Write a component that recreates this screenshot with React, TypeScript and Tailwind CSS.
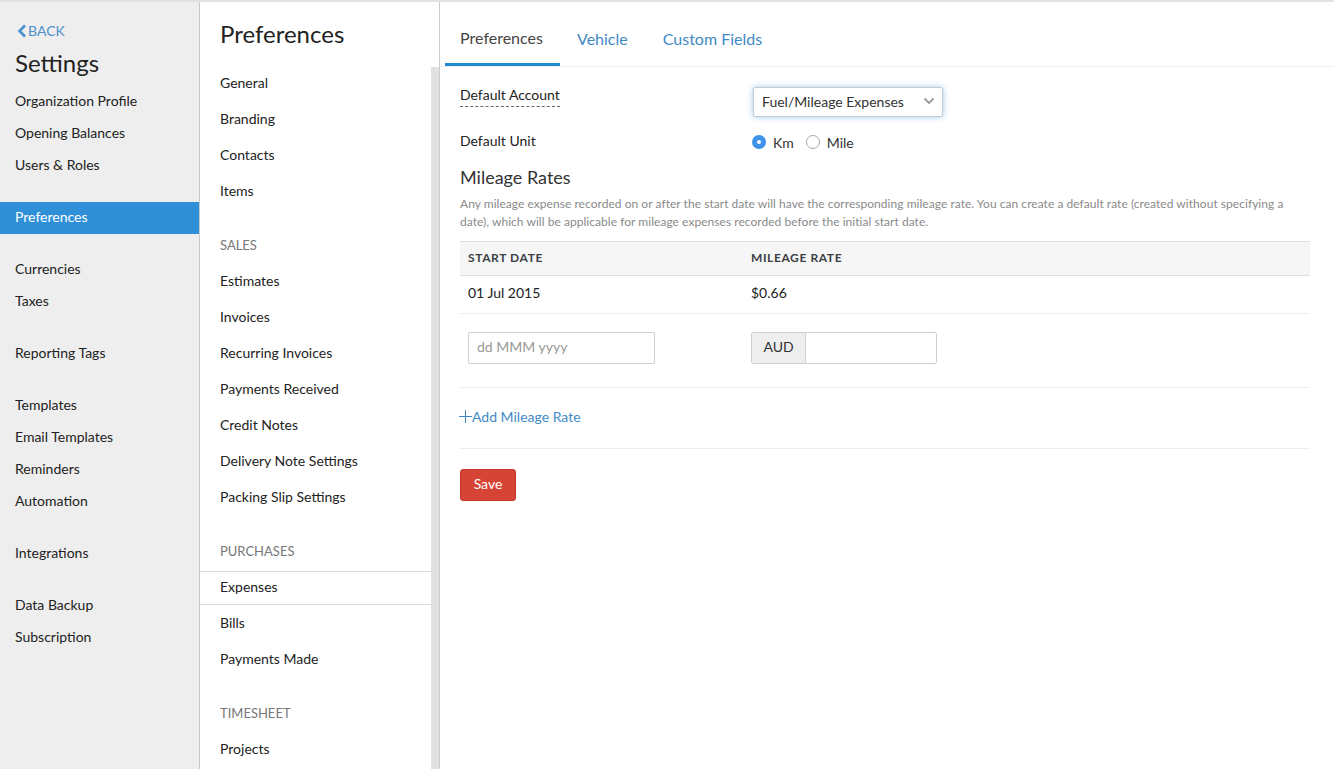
const F = { fontFamily: '"Lato", "Liberation Sans", sans-serif' };

function SideItem({ label, active }: { label: string; active?: boolean }) {
  return (
    <div className={`flex h-8 items-center pl-[15px] text-[14px] ${active ? 'bg-[#2f90d8] pb-1 text-white' : 'pb-[2px] text-[#222]'}`}>
      {label}
    </div>
  );
}

function SideGroup({ items, className = 'mb-5' }: { items: string[]; className?: string }) {
  return <div className={className}>{items.map((i) => <SideItem key={i} label={i} active={i === 'Preferences'} />)}</div>;
}

function MidItem({ label }: { label: string }) {
  return <div className="flex h-9 items-center pl-5 text-[14px] text-[#222]">{label}</div>;
}

function MidActive({ label }: { label: string }) {
  return (
    <div className="h-9 pt-[3px]">
      <div className="flex h-[34px] items-center border-y border-[#dcdcdc] pb-1 pl-5 text-[14px] text-[#222]">{label}</div>
    </div>
  );
}

function MidHead({ label }: { label: string }) {
  return <div className="mt-[18px] flex h-9 items-center pl-5 pt-1 text-[13px] text-[#777]">{label}</div>;
}

export default function App() {
  return (
    <div style={F} className="flex h-[769px] w-[1334px] overflow-hidden border-t-2 border-[#e2e2e2] bg-white">
      <aside className="w-[200px] shrink-0 border-r border-[#c8c8c8] bg-[#eeeeee]">
        <div className="flex items-center pl-[17px] pt-[19px] text-[14px] leading-5 text-[#4a90cc]">
          <svg width="10" height="14" viewBox="0 0 10 14" className="mr-px"><path d="M8 1.5 2.5 7 8 12.5" fill="none" stroke="#4a90cc" strokeWidth="2.6" /></svg>
          BACK
        </div>
        <h1 className="mb-[6px] pl-[15px] pt-[6px] text-[24px] font-normal leading-[32px] text-[#222]">Settings</h1>
        <SideGroup className="mb-[21px]" items={['Organization Profile', 'Opening Balances', 'Users & Roles']} />
        <SideGroup className="mb-[19px]" items={['Preferences']} />
        <SideGroup items={['Currencies', 'Taxes']} />
        <SideGroup items={['Reporting Tags']} />
        <SideGroup items={['Templates', 'Email Templates', 'Reminders', 'Automation']} />
        <SideGroup items={['Integrations']} />
        <SideGroup items={['Data Backup', 'Subscription']} />
      </aside>

      <nav className="flex w-[240px] shrink-0 flex-col border-r border-[#cccccc]">
        <h2 className="h-[62px] pl-5 pt-4 text-[24px] font-normal leading-8 text-[#222]">Preferences</h2>
        <div className="flex min-h-0 flex-1">
          <div className="min-w-0 flex-1">
            {['General', 'Branding', 'Contacts', 'Items'].map((i) => <MidItem key={i} label={i} />)}
            <MidHead label="SALES" />
            {['Estimates', 'Invoices', 'Recurring Invoices', 'Payments Received', 'Credit Notes', 'Delivery Note Settings', 'Packing Slip Settings'].map((i) => <MidItem key={i} label={i} />)}
            <MidHead label="PURCHASES" />
            <MidActive label="Expenses" />
            {['Bills', 'Payments Made'].map((i) => <MidItem key={i} label={i} />)}
            <MidHead label="TIMESHEET" />
            <MidItem label="Projects" />
          </div>
          <div className="mt-[3px] w-2 shrink-0 bg-[#e1e1e1]" />
        </div>
      </nav>

      <main className="min-w-0 flex-1">
        <div className="flex h-[65px] items-end border-b border-[#eeeeee] pl-[5px]">
          <div className="flex h-[65px] w-[115px] items-center justify-center border-b-[3px] border-[#1e88d2] pr-[2px] pt-[11px] text-[16px] text-[#444]">Preferences</div>
          <div className="flex h-[65px] items-center pl-[17px] pt-[10px] text-[16px] text-[#3f8ac6]">Vehicle</div>
          <div className="flex h-[65px] items-center pl-[35px] pt-[10px] text-[16px] text-[#3f8ac6]">Custom Fields</div>
        </div>

        <div className="pl-5 pr-6">
          <div className="flex h-[59px]">
            <div className="w-[293px] pt-[15px]">
              <span className="inline-block border-b border-dashed border-[#666] text-[14px] leading-[22px] text-[#222]">Default Account</span>
            </div>
            <div className="pt-5">
              <div className="flex h-[30px] w-[190px] items-center justify-between rounded-[2px] border border-[#c9c9c9] pb-[2px] pl-2 pr-[7px] text-[14px] text-[#333] shadow-[0_0_6px_rgba(80,160,225,0.55)]">
                Fuel/Mileage Expenses
                <svg width="12" height="8" viewBox="0 0 12 8"><path d="M1.5 1.5 6 6l4.5-4.5" fill="none" stroke="#999" strokeWidth="1.8" /></svg>
              </div>
            </div>
          </div>
          <div className="flex h-8 items-center">
            <div className="w-[292px] pb-1 text-[14px] text-[#222]">Default Unit</div>
            <div className="flex items-center text-[14px] text-[#333]">
              <span className="flex h-[14px] w-[14px] items-center justify-center rounded-full bg-[#3d92ea]"><span className="h-1 w-1 rounded-full bg-white" /></span>
              <span className="ml-[7px]">Km</span>
              <span className="ml-3 h-[14px] w-[14px] rounded-full border border-[#aaa]" />
              <span className="ml-[7px]">Mile</span>
            </div>
          </div>
          <h3 className="mt-[7px] text-[18px] font-normal leading-6 text-[#333]">Mileage Rates</h3>
          <p className="mt-[6px] w-[840px] text-[12px] leading-[18px] tracking-[0.04px] text-[#8a8a8a]">
            Any mileage expense recorded on or after the start date will have the corresponding mileage rate. You can create a default rate (created without specifying a date), which will be applicable for mileage expenses recorded before the initial start date.
          </p>

          <div className="mt-[10px] flex h-[35px] items-center border-y border-[#dedede] bg-[#f6f6f6] pb-[2px] pl-2 text-[12px] font-bold tracking-[0.6px] text-[#3b4045]">
            <div className="w-[283px]">START DATE</div>
            <div>MILEAGE RATE</div>
          </div>
          <div className="flex h-[38px] items-center border-b border-[#eeeeee] pb-1 pl-2 text-[14px] text-[#222]">
            <div className="w-[283px]">01 Jul 2015</div>
            <div>$0.66</div>
          </div>
          <div className="flex h-[74px] items-center border-b border-[#eeeeee] pb-[6px] pl-2 text-[14px]">
            <div className="w-[283px]">
              <div className="flex h-8 w-[187px] items-center rounded-[2px] border border-[#cfcfcf] pb-[2px] pl-2 text-[#999]">dd MMM yyyy</div>
            </div>
            <div className="flex h-8 w-[186px] rounded-[2px] border border-[#cfcfcf]">
              <div className="flex w-[54px] items-center justify-center border-r border-[#cfcfcf] bg-[#eeeeee] pb-[2px] text-[#333]">AUD</div>
            </div>
          </div>
          <div className="flex h-[61px] items-center border-b border-[#eeeeee] pb-1 text-[14px] text-[#3f8ac6]">
            <svg width="13" height="13" viewBox="0 0 13 13" className="-ml-px"><path d="M6.5 0v13M0 6.5h13" stroke="#3f8ac6" strokeWidth="1" /></svg>
            Add Mileage Rate
          </div>
          <button className="mt-5 flex h-8 w-[56px] items-center justify-center rounded-[3px] border border-[#c73a2c] bg-[#d64435] pb-[3px] text-[14px] text-white">Save</button>
        </div>
      </main>
    </div>
  );
}
